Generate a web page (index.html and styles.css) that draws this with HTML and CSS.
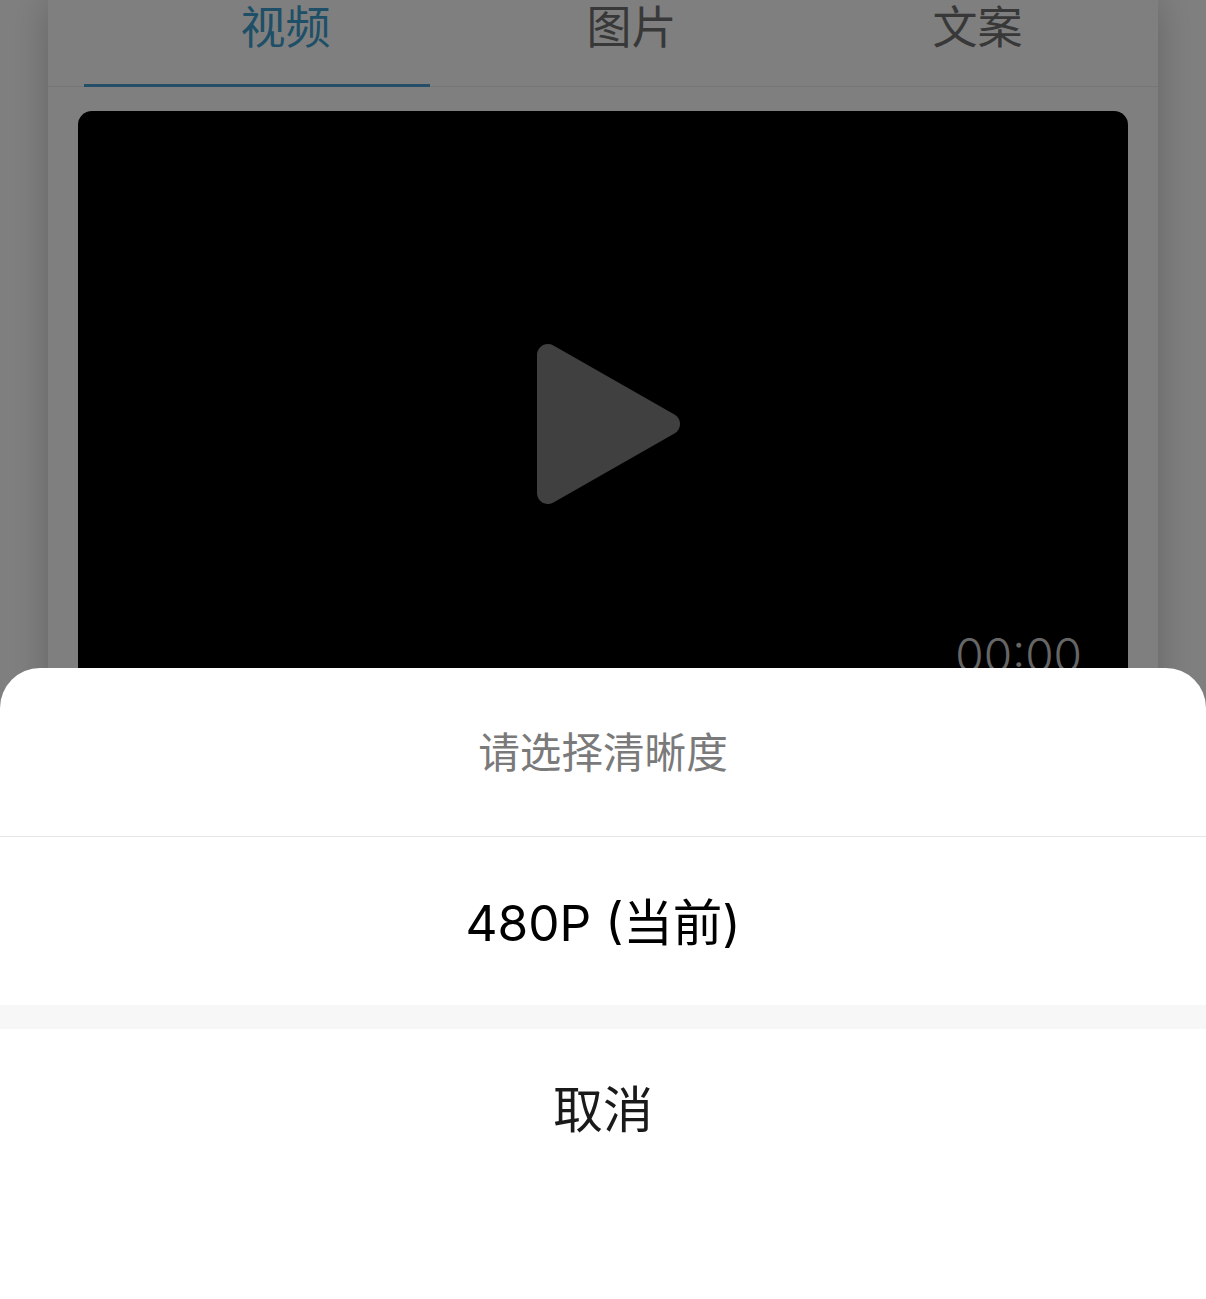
FILE: index.html
```html
<!DOCTYPE html>
<html lang="zh-CN">
<head>
<meta charset="utf-8">
<title>请选择清晰度</title>
<link rel="stylesheet" href="styles.css">
</head>
<body>
<div class="page">
  <main class="card">
    <nav class="tabs">
      <div class="tab active">视频</div>
      <div class="tab">图片</div>
      <div class="tab">文案</div>
    </nav>
    <section class="video">
      <svg class="play" width="154" height="160" viewBox="0 0 154 160" aria-hidden="true">
        <polygon points="22,11 143,80 22,149"/>
      </svg>
      <span class="time">00:00</span>
    </section>
  </main>
  <div class="mask"></div>
  <aside class="sheet">
    <div class="sheet-title">请选择清晰度</div>
    <div class="option">480P (当前)</div>
    <div class="gap"></div>
    <div class="cancel">取消</div>
    <div class="safe"></div>
  </aside>
</div>
</body>
</html>
```
FILE: styles.css
```css
* { box-sizing: border-box; }
html, body { margin: 0; padding: 0; }
body {
  font-family: "Inter", "Noto Sans CJK SC", sans-serif;
  background: #fff;
}
.page {
  position: relative;
  width: 1206px;
  height: 1299px;
  overflow: hidden;
  background: #ffffff;
  padding: 0 48px;
}
.card {
  background: #ffffff;
  height: 1299px;
  box-shadow: 0 0 36px rgba(0, 0, 0, 0.22);
}
.tabs {
  display: flex;
  height: 87px;
  padding: 0 36px;
  border-bottom: 1px solid #ededed;
}
.tab {
  flex: 1;
  height: 87px;
  padding: 0 0 34px 57px;
  display: flex;
  align-items: center;
  justify-content: center;
  border-bottom: 3px solid transparent;
  font-family: "Noto Sans CJK SC", sans-serif;
  font-size: 45px;
  line-height: 46px;
  color: #707070;
}
.tab.active {
  color: #3f9fcf;
  border-bottom-color: #4a9fd0;
}
.video {
  position: relative;
  display: flex;
  align-items: center;
  justify-content: center;
  margin: 24px 30px 0;
  height: 626px;
  background: #000;
  border-radius: 14px;
}
.play polygon {
  fill: #808080;
  stroke: #808080;
  stroke-width: 22;
  stroke-linejoin: round;
}
.time {
  position: absolute;
  right: 46px;
  bottom: 57px;
  font-family: "Inter", sans-serif;
  font-weight: 350;
  font-size: 46px;
  line-height: 50px;
  color: #cccccc;
}
.mask {
  position: absolute;
  inset: 0;
  background: rgba(0, 0, 0, 0.5);
}
.sheet {
  position: absolute;
  left: 0;
  right: 0;
  bottom: 0;
  height: 631px;
  display: flex;
  flex-direction: column;
  background: #fff;
  border-radius: 40px 40px 0 0;
  font-family: "Inter", "Noto Sans CJK SC", sans-serif;
}
.sheet-title {
  height: 169px;
  padding-bottom: 4px;
  display: flex;
  align-items: center;
  justify-content: center;
  border-bottom: 1px solid #e5e5e5;
  font-family: "Noto Sans CJK SC", sans-serif;
  font-size: 41.6px;
  color: #7a7a7a;
}
.option, .cancel {
  display: flex;
  align-items: center;
  justify-content: center;
}
.option {
  height: 168px;
  padding-bottom: 4px;
  font-size: 49.6px;
  color: #000;
}
.gap { height: 24px; background: #f7f7f7; }
.cancel {
  height: 160px;
  padding-bottom: 6px;
  font-size: 50px;
  color: #1a1a1a;
  font-family: "Noto Sans CJK SC", sans-serif;
}
.safe { flex: 1; }
```
